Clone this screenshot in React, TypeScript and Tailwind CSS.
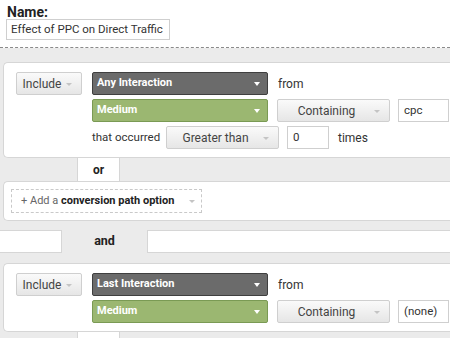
const font = { fontFamily: "Roboto, 'Liberation Sans', Arial, sans-serif" };

function Caret({ light }: { light?: boolean }): JSX.Element {
  return (
    <span
      className={
        light
          ? "inline-block h-0 w-0 border-x-[3.5px] border-t-[4px] border-x-transparent border-t-white"
          : "inline-block h-0 w-0 border-x-[3px] border-t-[3px] border-x-transparent border-t-[#c4c4c4]"
      }
    />
  );
}

function GrayButton({ label, className }: { label: string; className: string }): JSX.Element {
  return (
    <div
      className={`relative flex h-[23px] items-center justify-center rounded-[2px] border border-[#cfcfcf] bg-gradient-to-b from-[#fafafa] to-[#e6e6e6] text-[12px] text-[#444] ${className}`}
    >
      <span className="pr-[14px]">{label}</span>
      <span className="absolute right-[9px] top-[10px] flex">
        <Caret />
      </span>
    </div>
  );
}

function ColorSelect({ label, tone }: { label: string; tone: "dark" | "green" }): JSX.Element {
  const cls =
    tone === "dark"
      ? "bg-[#6b6b6b] border-[#3f3f3f]"
      : "bg-[#9bb771] border-[#7a9a54]";
  return (
    <div
      className={`flex h-[23px] w-[176px] items-center justify-between rounded-[2px] border pl-[4px] pr-[7px] text-[11px] font-bold text-white ${cls}`}
    >
      <span>{label}</span>
      <Caret light />
    </div>
  );
}

function Field({ value, className }: { value: string; className: string }): JSX.Element {
  return (
    <div
      className={`flex h-[23px] items-center border border-[#cfcfcf] bg-white pl-[5px] text-[11.5px] text-[#333] ${className}`}
    >
      {value}
    </div>
  );
}

function Tab({ label }: { label?: string }): JSX.Element {
  return (
    <div className="ml-[77px] flex h-[23px] w-[43px] items-center justify-center border-x border-[#d6d6d6] bg-white text-[12px] font-bold text-[#222]">
      {label}
    </div>
  );
}

function ConditionPanel({
  first,
  value,
  showCount,
}: {
  first: string;
  value: string;
  showCount?: boolean;
}): JSX.Element {
  return (
    <div className="ml-[3px] rounded-l-[5px] border border-r-0 border-[#d6d6d6] bg-white pb-[8px] pl-[12px] pt-[9px]">
      <div className="flex gap-[10px]">
        <GrayButton label="Include" className="w-[66px]" />
        <div className="flex flex-col gap-[4px]">
          <div className="flex items-center gap-[10px]">
            <ColorSelect label={first} tone="dark" />
            <span className="text-[12px] text-[#333]">from</span>
          </div>
          <div className="flex items-center">
            <ColorSelect label="Medium" tone="green" />
            <GrayButton label="Containing" className="ml-[9px] w-[113px]" />
            <Field value={value} className="ml-[8px] w-[51px]" />
          </div>
          {showCount && (
            <div className="flex items-center">
              <span className="w-[74px] text-[11.5px] text-[#333]">that occurred</span>
              <GrayButton label="Greater than" className="w-[113px]" />
              <Field value="0" className="ml-[8px] w-[42px]" />
              <span className="ml-[9px] text-[12px] text-[#333]">times</span>
            </div>
          )}
        </div>
      </div>
    </div>
  );
}

export default function App(): JSX.Element {
  return (
    <div className="h-[338px] w-[450px] overflow-hidden bg-white" style={font}>
      <div className="h-[48px] border-b border-dashed border-[#8a8a8a] pl-[7px] pt-[4px]">
        <div className="text-[14px] font-bold leading-[16px] text-[#222]">Name:</div>
        <div className="-ml-[1px] mt-[-1px] flex h-[21px] w-[164px] items-center border border-[#cfcfcf] pl-[4px] text-[11.5px] text-[#333]">
          Effect of PPC on Direct Traffic
        </div>
      </div>
      <div className="bg-[#ebebeb] pt-[14px]">
        <ConditionPanel first="Any Interaction" value="cpc" showCount />
        <Tab label="or" />
        <div className="ml-[3px] h-[40px] rounded-l-[5px] border border-r-0 border-[#d6d6d6] bg-white pl-[7px] pt-[7px]">
          <div className="flex h-[24px] w-[191px] items-center justify-between border border-dashed border-[#c9c9c9] pl-[9px] pr-[6px] text-[11px]">
            <span className="text-[#666]">
              + Add a <b className="text-[#222]">conversion path option</b>
            </span>
            <Caret />
          </div>
        </div>
        <div className="flex items-center pb-[10px] pt-[9px]">
          <div className="h-[23px] w-[62px] border border-l-0 border-[#d6d6d6] bg-white" />
          <span className="w-[85px] text-center text-[12.5px] font-bold text-[#222]">and</span>
          <div className="h-[23px] flex-1 border border-r-0 border-[#d6d6d6] bg-white" />
        </div>
        <ConditionPanel first="Last Interaction" value="(none)" />
        <Tab />
      </div>
    </div>
  );
}
